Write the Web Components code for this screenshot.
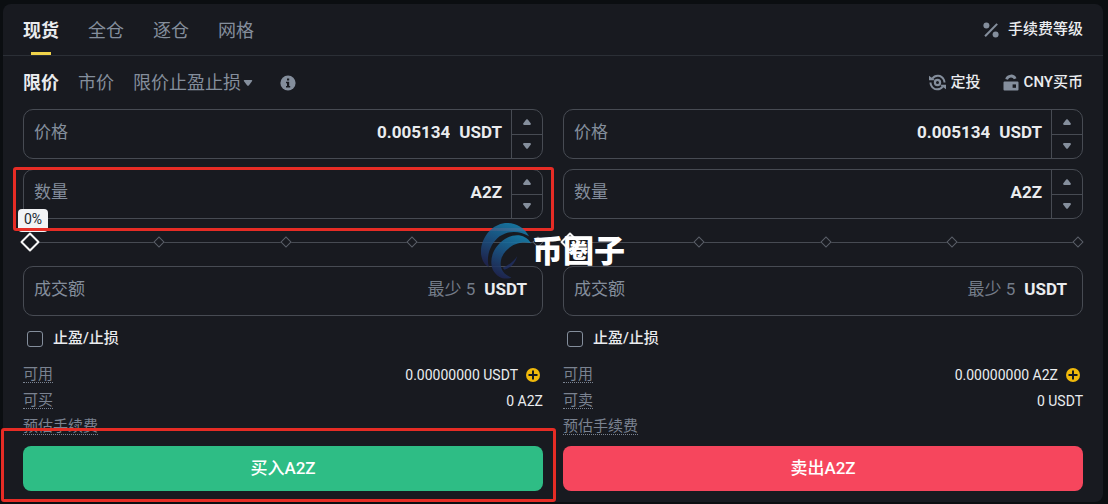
<!DOCTYPE html>
<html lang="zh-CN">
<head>
<meta charset="utf-8">
<meta name="viewport" content="width=device-width, initial-scale=1">
<title>现货交易</title>
<style>
  :root {
    --page: #0b0e11;
    --panel: #181a20;
    --line: #474b53;
    --divider: #2b2f36;
    --text: #eaecef;
    --muted: #848e9c;
    --mark: #e62c25;
    --buy: #2ebd85;
    --sell: #f6465d;
    --accent: #f0b90b;
  }
  body {
    margin: 0;
    background: var(--page);
    color: var(--text);
    font-family: Roboto, "Noto Sans CJK SC", sans-serif;
    font-size: 15px;
    line-height: 20px;
  }
</style>
</head>
<body>
<trade-panel></trade-panel>

<script>
class BaseElement extends HTMLElement {
  render(html) {
    const root = this.attachShadow({ mode: "open" });
    const template = document.createElement("template");
    template.innerHTML = `<style>
      *, *::before, *::after { box-sizing: border-box; }
      :host { display: block; }
      button, input { font: inherit; color: inherit; background: none; border: 0; padding: 0; margin: 0; }
      a { color: inherit; text-decoration: none; }
      svg { display: block; flex: none; }
    </style>` + html;
    root.append(template.content.cloneNode(true));
    return root;
  }
}

/* Red frame drawn around whatever is slotted in it. */
customElements.define("mark-frame", class extends BaseElement {
  connectedCallback() {
    this.render(`<style>
      :host { position: relative; }
      .frame {
        position: absolute; z-index: 3; pointer-events: none;
        inset: var(--frame-inset, -8px);
        border: 3px solid var(--mark); border-radius: 3px;
      }
    </style><slot></slot><div class="frame"></div>`);
  }
});

customElements.define("market-tabs", class extends BaseElement {
  connectedCallback() {
    this.render(`<style>
      :host { border-bottom: 1px solid var(--divider); }
      .bar { display: flex; justify-content: space-between; height: 51px; padding: 0 20px; }
      nav { display: flex; gap: 29px; font-size: 18px; }
      nav button { position: relative; color: var(--muted); height: 51px; padding-top: 2px; }
      nav button[aria-current] { color: var(--text); font-weight: 700; }
      nav button[aria-current]::after {
        content: ""; position: absolute; left: 8px; right: 8px; bottom: 0;
        height: 3px; background: #f0d34a;
      }
      a { display: flex; align-items: center; gap: 9px; font-weight: 500; }
      a span { padding-bottom: 2px; }
    </style>
    <div class="bar">
      <nav>
        <button type="button" aria-current="page">现货</button>
        <button type="button">全仓</button>
        <button type="button">逐仓</button>
        <button type="button">网格</button>
      </nav>
      <a href="#fees">
        <svg width="16" height="16" viewBox="0 0 16 16" fill="#848e9c" aria-hidden="true">
          <circle cx="3.400" cy="3.600" r="3"/><circle cx="12.600" cy="12.600" r="3"/>
          <path d="M13.400 1.200 L14.900 2.600 L2.800 15 L1.300 13.600 Z"/>
        </svg>
        <span>手续费等级</span>
      </a>
    </div>`);
  }
});

customElements.define("order-types", class extends BaseElement {
  connectedCallback() {
    this.render(`<style>
      :host { display: flex; justify-content: space-between; align-items: center; height: 53px; padding: 0 20px; }
      .types { display: flex; align-items: center; gap: 19px; font-size: 18px; color: var(--muted); }
      .types .on { color: var(--text); font-weight: 700; }
      .more { display: flex; align-items: center; gap: 2px; }
      .info { padding-left: 8px; }
      .links { display: flex; gap: 22px; font-weight: 500; }
      .links a { display: flex; align-items: center; gap: 5px; }
      .links span { padding-bottom: 2px; }
    </style>
    <div class="types">
      <button type="button" class="on">限价</button>
      <button type="button">市价</button>
      <button type="button" class="more">限价止盈止损
        <svg width="10" height="6" viewBox="0 0 10 6" fill="#848e9c" aria-hidden="true"><path d="M1.500 0h7q1.200.3.5 1.300L6 5.200q-1 1-2 0L1 1.300Q.3.3 1.500 0z"/></svg>
      </button>
      <button type="button" class="info" aria-label="说明">
        <svg width="16" height="16" viewBox="0 0 16 16" aria-hidden="true">
          <circle cx="8" cy="8" r="7.600" fill="#848e9c"/>
          <path d="M7 3.400h2.200v2H7zM6 6.800h3.200v4.300h1v1.500H6v-1.500h1V8.200H6z" fill="#181a20"/>
        </svg>
      </button>
    </div>
    <div class="links">
      <a href="#auto-invest">
        <svg width="17" height="17" viewBox="0 0 17 17" fill="none" stroke="#848e9c" stroke-width="2" aria-hidden="true">
          <path d="M3.200 4.600C6 .6 12.200.4 14.800 5.600Q15.500 7 15.500 8.600"/>
          <path d="M13.800 12.400C11 16.400 4.800 16.600 2.200 11.400Q1.500 10 1.500 8.400"/>
          <path d="M0 1.800L6.200 6.200H0zM17 15.200L10.800 10.800H17z" fill="#848e9c" stroke="none"/>
          <circle cx="8.500" cy="8.500" r="2.600" stroke-width="2.200"/>
        </svg>
        <span>定投</span>
      </a>
      <a href="#buy-crypto">
        <svg width="16" height="17" viewBox="0 0 16 17" aria-hidden="true">
          <path d="M3.600 5.400C4.600 1.200 10.600.8 12.200 4.800" fill="none" stroke="#848e9c" stroke-width="2.800"/>
          <path d="M1.500 7.600h13q1 0 1 1v7q0 1-1 1h-13q-1 0-1-1v-7q0-1 1-1z" fill="#848e9c"/>
          <path d="M9.600 10.400h3.400v3.400H9.600z" fill="#181a20"/>
        </svg>
        <span>CNY买币</span>
      </a>
    </div>`);
  }
});

/* Bordered number box: label, value, unit and an optional stepper. */
customElements.define("amount-field", class extends BaseElement {
  connectedCallback() {
    const attr = name => this.getAttribute(name) || "";
    const step = this.hasAttribute("stepper");
    this.render(`<style>
      .box {
        display: flex; height: 50px; overflow: hidden;
        border: 1px solid var(--line); border-radius: 10px; font-size: 17px;
      }
      .entry { display: flex; align-items: center; flex: 1; min-width: 0; gap: 9px; padding: 0 9px 4px 10px; }
      .entry.wide { padding-right: 15px; }
      label { color: var(--muted); }
      input { flex: 1; min-width: 0; width: 0; text-align: right; font-weight: 700; outline: 0; }
      input::placeholder { color: #747c89; opacity: 1; font-weight: 400; }
      .unit { font-weight: 700; }
      .steps { display: grid; grid-template-rows: 1fr 1fr; width: 31px; border-left: 1px solid var(--line); }
      .steps button { display: grid; place-items: center; }
      .steps button + button { border-top: 1px solid var(--line); padding-bottom: 2px; }
    </style>
    <div class="box">
      <div class="entry ${step ? "" : "wide"}">
        <label for="v">${attr("label")}</label>
        <input id="v" inputmode="decimal" autocomplete="off" value="${attr("value")}" placeholder="${attr("hint")}">
        <span class="unit">${attr("unit")}</span>
      </div>
      ${step ? `<div class="steps">
        <button type="button" aria-label="增加"><svg width="8" height="6" viewBox="0 0 8 6" fill="#848e9c"><path d="M3.200.6Q4-.2 4.800.6L7.800 4.500Q8.200 5.800 7 6H1Q-.2 5.800.2 4.500z"/></svg></button>
        <button type="button" aria-label="减少"><svg width="8" height="6" viewBox="0 0 8 6" fill="#848e9c"><path d="M3.200 5.400Q4 6.200 4.800 5.400L7.800 1.500Q8.200.2 7 0H1Q-.2.2.2 1.500z"/></svg></button>
      </div>` : ""}
    </div>`);
  }
});

customElements.define("percent-slider", class extends BaseElement {
  connectedCallback() {
    const tip = this.hasAttribute("tip");
    this.render(`<style>
      :host { display: grid; align-items: center; height: 47px; padding-bottom: 1px; box-sizing: border-box; position: relative; }
      .marks, input { grid-area: 1 / 1; }
      .marks {
        display: flex; justify-content: space-between; align-items: center;
        margin-left: 6px; padding-right: 1px; height: 10px;
        background: linear-gradient(var(--line), var(--line)) center / 100% 1px no-repeat;
      }
      .marks i { width: 8px; height: 8px; rotate: 45deg; background: var(--panel); border: 1px solid #5a5f68; }
      input { appearance: none; width: 100%; height: 20px; outline: 0; }
      input::-webkit-slider-thumb {
        appearance: none; width: 14px; height: 14px; rotate: 45deg;
        background: var(--panel); border: 2px solid #f5f5f5; border-radius: 1px;
      }
      output {
        position: absolute; z-index: 2; left: -5px; bottom: 34px;
        width: 30px; height: 23px; border-radius: 4px;
        background: #f2f3f5; color: #202630; font-size: 14px; line-height: 21px; text-align: center;
      }
    </style>
    <div class="marks"><i></i><i></i><i></i><i></i><i></i></div>
    <input id="p" type="range" min="0" max="100" value="0" aria-label="百分比">
    ${tip ? `<output for="p">0%</output>` : ""}`);
  }
});

customElements.define("balance-row", class extends BaseElement {
  connectedCallback() {
    this.render(`<style>
      :host { display: flex; justify-content: space-between; align-items: center; height: 26px; }
      .name { color: #7a8290; line-height: 15px; border-bottom: 1px dotted #7a8290; }
      .value { display: flex; align-items: center; font-size: 14px; }
      button { padding: 0 3px 0 8px; }
    </style>
    <span class="name">${this.getAttribute("name")}</span>
    <span class="value"><slot></slot>${this.hasAttribute("deposit") ? `
      <button type="button" aria-label="充值"><svg width="14" height="14" viewBox="0 0 14 14">
        <circle cx="7" cy="7" r="7" fill="#f0b90b"/>
        <path d="M7 2.500v9M2.500 7h9" stroke="#181a20" stroke-width="2"/>
      </svg></button>` : ""}</span>`);
  }
});

customElements.define("order-form", class extends BaseElement {
  connectedCallback() {
    const buy = this.getAttribute("side") === "buy";
    const amount = `<amount-field label="数量" unit="A2Z" stepper></amount-field>`;
    const submit = `<button type="submit" class="submit">${buy ? "买入A2Z" : "卖出A2Z"}</button>`;
    this.render(`<style>
      form { display: flex; flex-direction: column; }
      .fields { display: grid; gap: 10px; }
      .amount { --frame-inset: -2px -11px -12px -10px; }
      .send { --frame-inset: -18px -13px -11px -22px; }
      .check { display: flex; align-items: center; gap: 10px; height: 46px; padding-left: 4px; font-weight: 500; }
      .check span { padding-bottom: 2px; }
      .check input { appearance: none; width: 16px; height: 16px; border: 1px solid #848e9c; border-radius: 3px; }
      .check input:checked { background: var(--accent); }
      .balances { margin-bottom: 6px; }
      .submit {
        display: block; width: 100%; height: 45px; border-radius: 8px; padding-bottom: 2px;
        background: ${buy ? "var(--buy)" : "var(--sell)"}; color: #fff; font-size: 17px; font-weight: 500;
      }
    </style>
    <form onsubmit="return false">
      <div class="fields">
        <amount-field label="价格" value="0.005134" unit="USDT" stepper></amount-field>
        ${buy ? `<mark-frame class="amount">${amount}</mark-frame>` : amount}
      </div>
      <percent-slider ${buy ? "tip" : ""}></percent-slider>
      <amount-field label="成交额" hint="最少 5" unit="USDT"></amount-field>
      <label class="check"><input type="checkbox"><span>止盈/止损</span></label>
      <div class="balances">
        <balance-row name="可用" deposit>0.00000000 ${buy ? "USDT" : "A2Z"}</balance-row>
        <balance-row name="${buy ? "可买" : "可卖"}">0 ${buy ? "A2Z" : "USDT"}</balance-row>
        <balance-row name="预估手续费"></balance-row>
      </div>
      ${buy ? `<mark-frame class="send">${submit}</mark-frame>` : submit}
    </form>`);
  }
});

customElements.define("site-watermark", class extends BaseElement {
  connectedCallback() {
    this.render(`<style>
      :host { display: flex; align-items: center; pointer-events: none; }
      svg { opacity: .85; }
      span { color: #fff; font-size: 31px; line-height: 40px; font-weight: 900; padding-top: 2px; }
    </style>
    <svg width="51" height="58" viewBox="0 0 52 58" aria-hidden="true">
      <defs><linearGradient id="g" x1="0.7" y1="0" x2="0.3" y2="1">
        <stop offset="0" stop-color="#1685b4"/><stop offset="0.5" stop-color="#1b5488"/><stop offset="1" stop-color="#202654"/>
      </linearGradient></defs>
      <path fill="url(#g)" d="M49 14C43 3 32-1 22 1C8 4-1 19 0 32C1 39 4 44 8 45C5 35 9 22 19 14C28 8 39 8 49 14Z"/>
      <path fill="url(#g)" d="M51 21C45 11 33 11 24 17C12 25 8 38 12 48C16 56 25 59 31 56C22 53 18 45 21 36C25 26 36 18 51 21Z"/>
      <path fill="#202e60" d="M22 46C29 43 34 39 37 34C35 41 31 46 24 48Z"/>
    </svg>
    <span>币圈子</span>`);
  }
});

customElements.define("trade-panel", class extends BaseElement {
  connectedCallback() {
    this.render(`<style>
      :host { padding: 4px 5px 2px 3px; }
      main { background: var(--panel); border-radius: 8px; padding-bottom: 11px; }
      .forms { position: relative; display: grid; grid-template-columns: 1fr 1fr; gap: 20px; padding: 0 20px; }
      site-watermark { position: absolute; z-index: 4; top: 113px; left: 50%; transform: translateX(-50%); }
    </style>
    <main>
      <market-tabs></market-tabs>
      <order-types></order-types>
      <div class="forms">
        <order-form side="buy"></order-form>
        <order-form side="sell"></order-form>
        <site-watermark></site-watermark>
      </div>
    </main>`);
  }
});
</script>
</body>
</html>
